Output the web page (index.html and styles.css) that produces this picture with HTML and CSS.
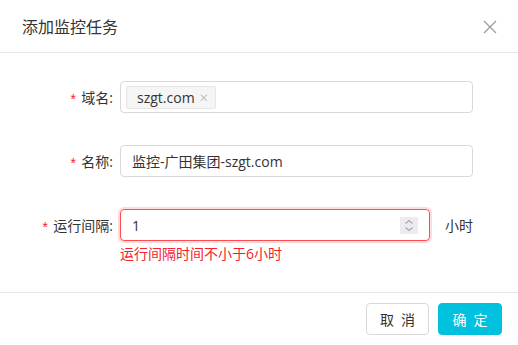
FILE: index.html
```html
<!DOCTYPE html>
<html lang="zh-CN">
<head>
  <meta charset="UTF-8">
  <title>添加监控任务</title>
  <link rel="stylesheet" href="styles.css">
</head>
<body>
  <div class="dialog">
    <div class="dialog-header">
      <span class="dialog-title">添加监控任务</span>
      <span class="close">
        <svg width="14" height="14" viewBox="0 0 14 14"><path d="M1 1 L13 13 M13 1 L1 13" stroke="#9a9a9a" stroke-width="1.2" fill="none"/></svg>
      </span>
    </div>

    <div class="dialog-body">
      <div class="form-row">
        <label class="form-label"><span class="req">*</span>域名:</label>
        <div class="input wide">
          <span class="tag">szgt.com<span class="tag-x">×</span></span>
        </div>
      </div>

      <div class="form-row">
        <label class="form-label"><span class="req">*</span>名称:</label>
        <div class="input wide text">监控-广田集团-szgt.com</div>
      </div>

      <div class="form-row has-error">
        <label class="form-label"><span class="req">*</span>运行间隔:</label>
        <div class="field">
          <div class="input narrow error text">
            <span>1</span>
            <span class="spinner">
              <svg width="18" height="17" viewBox="0 0 18 17"><path d="M5.5 6.5 L9 3.5 L12.5 6.5 M5.5 10.5 L9 13.5 L12.5 10.5" stroke="#a6a6ae" stroke-width="1.2" fill="none"/></svg>
            </span>
          </div>
          <div class="error-msg">运行间隔时间不小于6小时</div>
        </div>
        <span class="unit">小时</span>
      </div>
    </div>

    <div class="dialog-footer">
      <button class="btn">取 消</button>
      <button class="btn btn-primary">确 定</button>
    </div>
  </div>
</body>
</html>
```

FILE: styles.css
```css
body {
  margin: 0;
  background: #fff;
  font-family: "Open Sans", "Noto Sans CJK SC", sans-serif;
  color: #333;
}

.dialog {
  width: 518px;
}

.dialog-header {
  height: 52px;
  padding: 0 21px 0 22px;
  border-bottom: 1px solid #e8e8e8;
  display: flex;
  align-items: center;
  justify-content: space-between;
}
.dialog-title {
  font-size: 16px;
  color: #333;
}
.close {
  display: flex;
  margin-top: 2px;
}

.dialog-body {
  padding: 28px 0 28px;
  display: flex;
  flex-direction: column;
  gap: 32px;
}

.form-row {
  display: flex;
  align-items: flex-start;
  font-size: 14px;
}
.form-label {
  width: 113px;
  height: 32px;
  margin-right: 7px;
  display: flex;
  align-items: center;
  justify-content: flex-end;
  color: #333;
}
.req {
  color: #f5222d;
  margin: 7px 4px 0 0;
  font-family: "Liberation Mono", monospace;
}

.input {
  box-sizing: border-box;
  height: 32px;
  border: 1px solid #d9d9d9;
  border-radius: 4px;
  display: flex;
  align-items: center;
  padding: 0 4px 0 5px;
}
.input.text {
  padding-left: 11px;
}
.wide { width: 353px; }
.narrow {
  width: 310px;
  justify-content: space-between;
  padding-right: 11px;
}
.input.error {
  border-color: #ff4d4f;
  box-shadow: 0 0 0 2px rgba(255, 77, 79, 0.2);
}

.tag {
  height: 23px;
  box-sizing: border-box;
  display: flex;
  align-items: center;
  padding: 0 7px 0 10px;
  background: #f5f5f5;
  border: 1px solid #e6e6e6;
  border-radius: 2px;
  font-size: 14px;
  color: #333;
}
.tag-x {
  color: #a8a8a8;
  margin-left: 5px;
  font-size: 15px;
  font-weight: 300;
}

.spinner {
  width: 18px;
  height: 17px;
  background: #ebebf0;
  display: flex;
}

.error-msg {
  color: #f5222d;
  font-size: 14px;
  line-height: 20px;
  margin-top: 3px;
}
.unit {
  height: 32px;
  display: flex;
  align-items: center;
  margin-left: 15px;
}

.dialog-footer {
  border-top: 1px solid #e8e8e8;
  padding: 10px 16px;
  display: flex;
  justify-content: flex-end;
  gap: 9px;
}
.btn {
  width: 63px;
  height: 32px;
  border: 1px solid #d9d9d9;
  border-radius: 4px;
  background: #fff;
  font-family: "Noto Sans CJK SC", sans-serif;
  font-size: 14px;
  word-spacing: 4px;
  color: #333;
  padding: 0;
}
.btn-primary {
  width: 64px;
  background: #00c1de;
  border-color: #00c1de;
  color: #fff;
}
```
